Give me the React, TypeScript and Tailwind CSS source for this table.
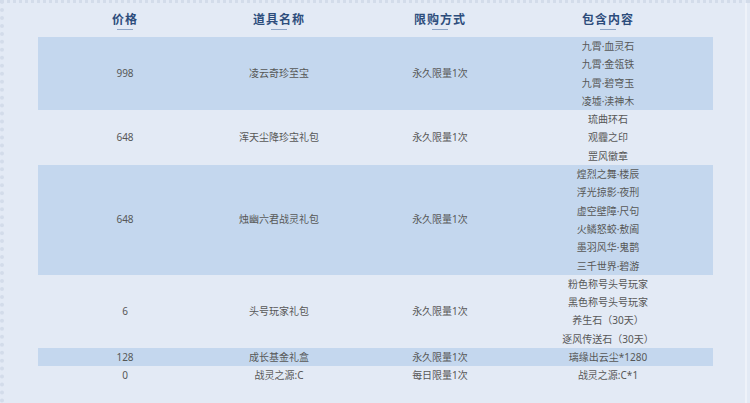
import React from "react";

type Row = { price: string; name: string; limit: string; items: string[]; hl: boolean };

const rows: Row[] = [
  { price: "998", name: "凌云奇珍至宝", limit: "永久限量1次", items: ["九霄·血灵石", "九霄·金瓴铁", "九霄·碧穹玉", "凌墟·渎神木"], hl: true },
  { price: "648", name: "浑天尘降珍宝礼包", limit: "永久限量1次", items: ["琉曲环石", "观霾之印", "罡风徽章"], hl: false },
  { price: "648", name: "烛幽六君战灵礼包", limit: "永久限量1次", items: ["煌烈之舞·楼辰", "浮光掠影·夜刑", "虚空壁障·尺句", "火鳞怒蛟·敖阖", "墨羽风华·鬼鹊", "三千世界·碧游"], hl: true },
  { price: "6", name: "头号玩家礼包", limit: "永久限量1次", items: ["粉色称号头号玩家", "黑色称号头号玩家", "养生石（30天）", "逐风传送石（30天）"], hl: false },
  { price: "128", name: "成长基金礼盒", limit: "永久限量1次", items: ["璃缘出云尘*1280"], hl: true },
  { price: "0", name: "战灵之源:C", limit: "每日限量1次", items: ["战灵之源:C*1"], hl: false },
];

const headers = ["价格", "道具名称", "限购方式", "包含内容"];

export default function App() {
  return (
    <div
      className="w-[750px] h-[403px] overflow-hidden bg-[#e3eaf5] border-t-[3px] border-l-[4px] border-dotted border-[#d3dcea] text-[#575757]"
      style={{ fontFamily: '"Noto Sans", "Noto Sans CJK SC", sans-serif' }}
    >
      <div className="flex h-full">
        <div className="pl-[34px] w-[741px]">
          <div className="grid grid-cols-[174px_134px_188px_148px_31px] w-[675px] h-[34px]">
            {headers.map((h) => (
              <div key={h} className="flex flex-col items-center justify-center pt-[1px]">
                <span
                  className="text-[12px] font-bold leading-[16px] tracking-[1px] text-[#2d4d7c]"
                  style={{ fontFamily: '"Noto Sans CJK SC", sans-serif' }}
                >
                  {h}
                </span>
                <div className="w-[16px] h-px bg-[#8ea5c6] mt-[2px]" />
              </div>
            ))}
            <div />
          </div>
          {rows.map((r, i) => (
            <div
              key={i}
              className={`grid grid-cols-[174px_134px_188px_148px_31px] w-[675px] text-[10px] ${r.hl ? "bg-[#c4d7ee]" : ""}`}
            >
              <div className="flex items-center justify-center">{r.price}</div>
              <div className="flex items-center justify-center">{r.name}</div>
              <div className="flex items-center justify-center">{r.limit}</div>
              <div className="flex flex-col items-center">
                {r.items.map((it) => (
                  <div key={it} className="leading-[18.3px] whitespace-nowrap">
                    {it}
                  </div>
                ))}
              </div>
              <div />
            </div>
          ))}
        </div>
        <div className="w-[2px] h-full bg-[#eef2f9]" />
      </div>
    </div>
  );
}
